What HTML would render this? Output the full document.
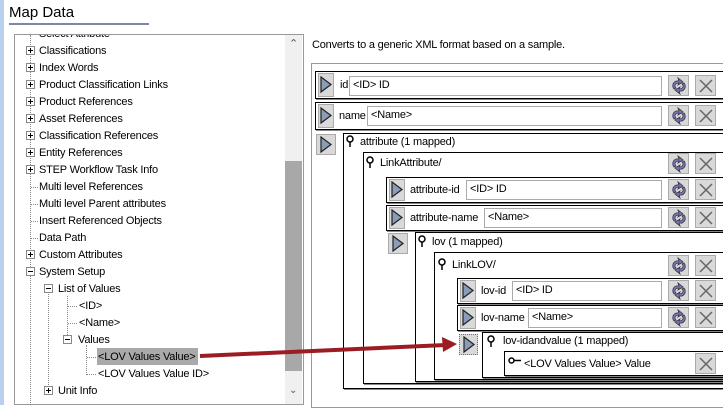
<!DOCTYPE html>
<html><head><meta charset="utf-8"><style>
*{box-sizing:border-box;margin:0;padding:0}
body{width:723px;height:405px;overflow:hidden;background:#fff;font-family:"Liberation Sans",sans-serif;font-size:11px;letter-spacing:-0.2px;color:#000;position:relative}
.a{position:absolute;white-space:nowrap}
.t{position:absolute;white-space:nowrap;line-height:14px}
.box{position:absolute;border:1px solid #000;box-shadow:inset 1px 1px 0 #fff,1px 1px 0 #888}
.inp{position:absolute;border:1px solid #aaa;background:#fff;padding-left:3px;line-height:17px;height:20px}
.btn{position:absolute;background:#d9d9d9;border:1px solid #aaa}
.btn svg{position:absolute;left:50%;top:50%;transform:translate(-50%,-50%)}
.tv{position:absolute;line-height:14px;white-space:nowrap}
.pb{position:absolute;width:9px;height:9px;border:1px solid #888;background:#fff}
.pb:before{content:"";position:absolute;left:1px;top:3px;width:5px;height:1px;background:#000}
.pb.p:after{content:"";position:absolute;left:3px;top:1px;width:1px;height:5px;background:#000}
.dv{position:absolute;border-left:1px dotted #888}
.dh{position:absolute;border-top:1px dotted #888}
</style></head><body>
<div class="a" style="left:0;top:0;width:4px;height:405px;background:#b9d1ee"></div>
<div class="a" style="left:9px;top:4px;font-size:15px;letter-spacing:0">Map Data</div>
<div class="a" style="left:9px;top:23px;width:140px;height:2px;background:#7a8aa0"></div>
<!-- left pane -->
<div class="a" style="left:14px;top:34px;width:290px;height:371px;border:1px solid #999;overflow:hidden">
 <div class="a" style="left:270px;top:0;width:17px;height:371px;background:#f0f0f0"></div>
 <div class="a" style="left:270px;top:126px;width:17px;height:210px;background:#a8a8a8"></div>
 <div class="a" style="left:274px;top:2px;font-size:11px;color:#555">&#8963;</div>
 <div class="a" style="left:274px;top:350px;font-size:10px;color:#555">&#8964;</div>
</div>
<div class="a" style="left:15px;top:35px;width:269px;height:370px;overflow:hidden">
<div class="a" style="left:-15px;top:-35px;width:300px;height:405px">
<div class="dv" style="left:30px;top:35px;height:370px"></div>
<div class="dv" style="left:48px;top:285px;height:110px"></div>
<div class="dv" style="left:67px;top:296px;height:45px"></div>
<div class="dv" style="left:86px;top:345px;height:30px"></div>
<div class="tv" style="left:39px;top:27px">Select Attribute</div>
<div class="pb p" style="left:26px;top:46px"></div><div class="tv" style="left:39px;top:44px">Classifications</div>
<div class="pb p" style="left:26px;top:63px"></div><div class="tv" style="left:39px;top:61px">Index Words</div>
<div class="pb p" style="left:26px;top:80px"></div><div class="tv" style="left:39px;top:78px">Product Classification Links</div>
<div class="pb p" style="left:26px;top:97px"></div><div class="tv" style="left:39px;top:95px">Product References</div>
<div class="pb p" style="left:26px;top:114px"></div><div class="tv" style="left:39px;top:112px">Asset References</div>
<div class="pb p" style="left:26px;top:131px"></div><div class="tv" style="left:39px;top:129px">Classification References</div>
<div class="pb p" style="left:26px;top:148px"></div><div class="tv" style="left:39px;top:146px">Entity References</div>
<div class="pb p" style="left:26px;top:165px"></div><div class="tv" style="left:39px;top:163px">STEP Workflow Task Info</div>
<div class="dh" style="left:31px;top:187px;width:7px"></div><div class="tv" style="left:39px;top:180px">Multi level References</div>
<div class="dh" style="left:31px;top:204px;width:7px"></div><div class="tv" style="left:39px;top:197px">Multi level Parent attributes</div>
<div class="dh" style="left:31px;top:221px;width:7px"></div><div class="tv" style="left:39px;top:214px">Insert Referenced Objects</div>
<div class="dh" style="left:31px;top:238px;width:7px"></div><div class="tv" style="left:39px;top:231px">Data Path</div>
<div class="pb p" style="left:26px;top:250px"></div><div class="tv" style="left:39px;top:248px">Custom Attributes</div>
<div class="pb" style="left:26px;top:267px"></div><div class="tv" style="left:39px;top:265px">System Setup</div>
<div class="pb" style="left:44px;top:284px"></div><div class="tv" style="left:58px;top:282px">List of Values</div>
<div class="dh" style="left:68px;top:306px;width:9px"></div><div class="tv" style="left:79px;top:299px">&lt;ID&gt;</div>
<div class="dh" style="left:68px;top:323px;width:9px"></div><div class="tv" style="left:79px;top:316px">&lt;Name&gt;</div>
<div class="pb" style="left:63px;top:335px"></div><div class="tv" style="left:78px;top:333px">Values</div>
<div class="dh" style="left:87px;top:357px;width:9px"></div>
<div class="a" style="left:97px;top:348px;width:101px;height:17px;background:#a9a9a9"></div>
<div class="tv" style="left:98px;top:350px">&lt;LOV Values Value&gt;</div>
<div class="dh" style="left:87px;top:374px;width:9px"></div><div class="tv" style="left:98px;top:367px">&lt;LOV Values Value ID&gt;</div>
<div class="pb p" style="left:44px;top:386px"></div><div class="tv" style="left:58px;top:384px">Unit Info</div>
</div></div>

<!-- right -->
<div class="a" style="left:312px;top:39px">Converts to a generic XML format based on a sample.</div>
<div class="a" style="left:311px;top:63px;width:420px;height:345px;border:1px solid #999"></div>

<svg width="0" height="0" style="position:absolute"><defs>
<g id="tri"><path d="M1 1 L11 8.5 L1 16 Z" fill="#8a9cb8" stroke="#222" stroke-width="1.2"/></g>
<g id="ref"><path d="M4 12 C1 8 4 3 9 4 L8 1 L13 5 L8 8 L9 6 C5 6 4 9 6 11Z M14 6 C17 10 14 15 9 14 L10 17 L5 13 L10 10 L9 12 C13 12 14 9 12 7Z" fill="#7d77c8" stroke="#333" stroke-width="0.8"/></g>
<g id="x"><path d="M3 3 L15 15 M15 3 L3 15" stroke="#666" stroke-width="1.5"/></g>
<g id="pin"><circle cx="4" cy="4" r="3" fill="#fff" stroke="#000" stroke-width="1.5"/><path d="M4 7 V12" stroke="#000" stroke-width="1.5"/></g>
</defs></svg>

<!-- group boxes -->
<div class="box" style="left:343px;top:133px;width:400px;height:256px"></div>
<div class="box" style="left:363px;top:152px;width:380px;height:232px"></div>
<div class="box" style="left:415px;top:232px;width:330px;height:150px"></div>
<div class="box" style="left:434px;top:252px;width:310px;height:128px"></div>
<div class="box" style="left:482px;top:332px;width:260px;height:46px"></div>
<div class="box" style="left:504px;top:351px;width:230px;height:25px"></div>

<svg class="a" style="left:346px;top:135px" width="9" height="13"><use href="#pin"/></svg><div class="t" style="left:360px;top:135px">attribute (1 mapped)</div>
<svg class="a" style="left:366px;top:156px" width="9" height="13"><use href="#pin"/></svg><div class="t" style="left:380px;top:156px">LinkAttribute/</div>
<svg class="a" style="left:418px;top:235px" width="9" height="13"><use href="#pin"/></svg><div class="t" style="left:432px;top:235px">lov (1 mapped)</div>
<svg class="a" style="left:438px;top:258px" width="9" height="13"><use href="#pin"/></svg><div class="t" style="left:452px;top:258px">LinkLOV/</div>
<svg class="a" style="left:487px;top:335px" width="9" height="13"><use href="#pin"/></svg><div class="t" style="left:503px;top:334px">lov-idandvalue (1 mapped)</div>
<svg class="a" style="left:508px;top:357px" width="14" height="8"><circle cx="3.5" cy="3.5" r="2.5" fill="#fff" stroke="#000" stroke-width="1.5"/><path d="M6 3.5H13" stroke="#000" stroke-width="1.5"/></svg>
<div class="t" style="left:524px;top:357px">&lt;LOV Values Value&gt; Value</div>

<!-- leaf rows -->
<div class="box" style="left:315px;top:71px;width:420px;height:28px"></div>
<div class="box" style="left:315px;top:102px;width:420px;height:28px"></div>
<div class="box" style="left:386px;top:177px;width:350px;height:26px"></div>
<div class="box" style="left:386px;top:205px;width:350px;height:26px"></div>
<div class="box" style="left:457px;top:278px;width:280px;height:26px"></div>
<div class="box" style="left:457px;top:305px;width:280px;height:26px"></div>

<div class="btn" style="left:318px;top:73px;width:16px;height:24px"><svg width="12" height="18"><use href="#tri"/></svg></div>
<div class="btn" style="left:318px;top:104px;width:16px;height:24px"><svg width="12" height="18"><use href="#tri"/></svg></div>
<div class="btn" style="left:389px;top:179px;width:16px;height:22px"><svg width="12" height="18"><use href="#tri"/></svg></div>
<div class="btn" style="left:389px;top:207px;width:16px;height:22px"><svg width="12" height="18"><use href="#tri"/></svg></div>
<div class="btn" style="left:460px;top:280px;width:16px;height:22px"><svg width="12" height="18"><use href="#tri"/></svg></div>
<div class="btn" style="left:460px;top:307px;width:16px;height:22px"><svg width="12" height="18"><use href="#tri"/></svg></div>
<div class="btn" style="left:316px;top:134px;width:20px;height:21px"><svg width="12" height="18"><use href="#tri"/></svg></div>
<div class="btn" style="left:388px;top:233px;width:20px;height:21px"><svg width="12" height="18"><use href="#tri"/></svg></div>
<div class="btn" style="left:459px;top:334px;width:19px;height:21px;border:1px dotted #3377dd"><svg width="12" height="18"><use href="#tri"/></svg></div>

<div class="t" style="left:340px;top:78px">id</div><div class="inp" style="left:349px;top:76px;width:313px">&lt;ID&gt; ID</div>
<div class="t" style="left:339px;top:109px">name</div><div class="inp" style="left:367px;top:106px;width:295px">&lt;Name&gt;</div>
<div class="t" style="left:410px;top:183px">attribute-id</div><div class="inp" style="left:466px;top:180px;width:196px">&lt;ID&gt; ID</div>
<div class="t" style="left:410px;top:211px">attribute-name</div><div class="inp" style="left:484px;top:208px;width:178px">&lt;Name&gt;</div>
<div class="t" style="left:481px;top:284px">lov-id</div><div class="inp" style="left:512px;top:281px;width:150px">&lt;ID&gt; ID</div>
<div class="t" style="left:481px;top:311px">lov-name</div><div class="inp" style="left:528px;top:308px;width:134px">&lt;Name&gt;</div>

<!-- action buttons -->
<div class="btn" style="left:668px;top:75px;width:21px;height:21px"><svg width="18" height="18"><use href="#ref"/></svg></div>
<div class="btn" style="left:695px;top:75px;width:21px;height:21px"><svg width="18" height="18"><use href="#x"/></svg></div>
<div class="btn" style="left:668px;top:105px;width:21px;height:21px"><svg width="18" height="18"><use href="#ref"/></svg></div>
<div class="btn" style="left:695px;top:105px;width:21px;height:21px"><svg width="18" height="18"><use href="#x"/></svg></div>
<div class="btn" style="left:668px;top:153px;width:21px;height:21px"><svg width="18" height="18"><use href="#ref"/></svg></div>
<div class="btn" style="left:695px;top:153px;width:21px;height:21px"><svg width="18" height="18"><use href="#x"/></svg></div>
<div class="btn" style="left:668px;top:179px;width:21px;height:21px"><svg width="18" height="18"><use href="#ref"/></svg></div>
<div class="btn" style="left:695px;top:179px;width:21px;height:21px"><svg width="18" height="18"><use href="#x"/></svg></div>
<div class="btn" style="left:668px;top:207px;width:21px;height:21px"><svg width="18" height="18"><use href="#ref"/></svg></div>
<div class="btn" style="left:695px;top:207px;width:21px;height:21px"><svg width="18" height="18"><use href="#x"/></svg></div>
<div class="btn" style="left:668px;top:255px;width:21px;height:21px"><svg width="18" height="18"><use href="#ref"/></svg></div>
<div class="btn" style="left:695px;top:255px;width:21px;height:21px"><svg width="18" height="18"><use href="#x"/></svg></div>
<div class="btn" style="left:668px;top:280px;width:21px;height:21px"><svg width="18" height="18"><use href="#ref"/></svg></div>
<div class="btn" style="left:695px;top:280px;width:21px;height:21px"><svg width="18" height="18"><use href="#x"/></svg></div>
<div class="btn" style="left:668px;top:307px;width:21px;height:21px"><svg width="18" height="18"><use href="#ref"/></svg></div>
<div class="btn" style="left:695px;top:307px;width:21px;height:21px"><svg width="18" height="18"><use href="#x"/></svg></div>
<div class="btn" style="left:695px;top:353px;width:21px;height:21px"><svg width="18" height="18"><use href="#x"/></svg></div>

<!-- arrow -->
<svg class="a" style="left:0;top:0" width="723" height="405"><path d="M200 356 L446 345" stroke="#9b1c22" stroke-width="4"/><path d="M457 344 L442 337 L443 352 Z" fill="#9b1c22"/></svg>
</body></html>
